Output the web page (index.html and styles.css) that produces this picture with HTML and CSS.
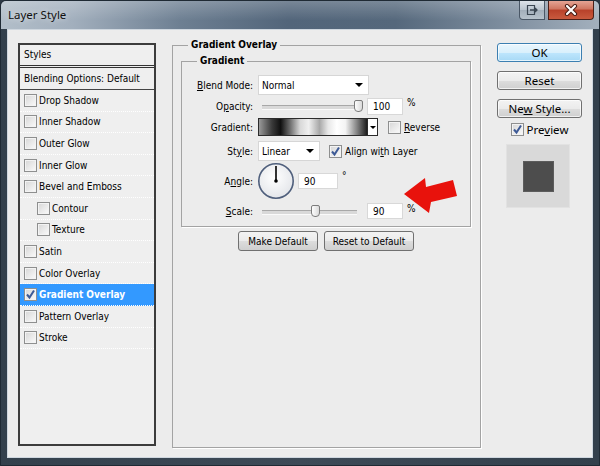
FILE: index.html
```html
<!DOCTYPE html>
<html lang="en">
<head>
    <meta charset="UTF-8">
    <meta name="viewport" content="width=device-width, initial-scale=1.0">
    <link rel="stylesheet" href="styles.css">
    <title>Layer Style</title>
</head>
<body>

<div class="window">
    <div class="titlebar">
        <span class="title">Layer Style</span>
        <div class="caption">
            <span class="cap-btn cap-other">
                <svg width="12" height="12" viewBox="0 0 12 12">
                    <path d="M1.5 1.5h7v9h-7z" fill="none" stroke="#3b4652" stroke-width="1.2"/>
                    <path d="M4 6h7M9 4l2 2-2 2" fill="none" stroke="#3b4652" stroke-width="1.3"/>
                </svg>
            </span>
            <span class="cap-btn cap-close">
                <svg width="14" height="12" viewBox="0 0 14 12">
                    <path d="M3 2l8 8M11 2l-8 8" stroke="#4a1d14" stroke-width="4.2" stroke-linecap="round"/>
                    <path d="M3 2l8 8M11 2l-8 8" stroke="#fff" stroke-width="2.2" stroke-linecap="round"/>
                </svg>
            </span>
        </div>
    </div>

    <div class="frame">
        <div class="client">

            <div class="styles-panel">
                <div class="panel-head">Styles</div>
                <div class="panel-blend">Blending Options: Default</div>
                <div class="fx"><span class="cb"></span>Drop Shadow</div>
                <div class="fx"><span class="cb"></span>Inner Shadow</div>
                <div class="fx"><span class="cb"></span>Outer Glow</div>
                <div class="fx"><span class="cb"></span>Inner Glow</div>
                <div class="fx"><span class="cb"></span>Bevel and Emboss</div>
                <div class="fx sub"><span class="cb"></span>Contour</div>
                <div class="fx sub"><span class="cb"></span>Texture</div>
                <div class="fx"><span class="cb"></span>Satin</div>
                <div class="fx"><span class="cb"></span>Color Overlay</div>
                <div class="fx on"><span class="cb"><svg width="11" height="11" viewBox="0 0 11 11"><path d="M2 5.5l2.5 3L9 1.5" fill="none" stroke="#3d5a96" stroke-width="2"/></svg></span>Gradient Overlay</div>
                <div class="fx"><span class="cb"></span>Pattern Overlay</div>
                <div class="fx"><span class="cb"></span>Stroke</div>
            </div>

            <fieldset class="group main">
                <legend>Gradient Overlay</legend>

                <fieldset class="group inner">
                    <legend>Gradient</legend>

                    <div class="row r-blend">
                        <span class="lbl"><u>B</u>lend Mode:</span>
                        <span class="select sel-blend">Normal<span class="caret"></span></span>
                    </div>

                    <div class="row r-opacity">
                        <span class="lbl">O<u>p</u>acity:</span>
                        <span class="slider sl-opacity"><span class="thumb" style="left: 92px"></span></span>
                        <span class="num num-opacity">100</span>
                        <span class="unit">%</span>
                    </div>

                    <div class="row r-gradient">
                        <span class="lbl">Gradient:</span>
                        <span class="grad-pick"><span class="grad"></span><span class="grad-drop"><span class="caret small"></span></span></span>
                        <span class="cb cb-reverse"></span>
                        <span class="cb-text"><u>R</u>everse</span>
                    </div>

                    <div class="row r-style">
                        <span class="lbl">St<u>y</u>le:</span>
                        <span class="select sel-style">Linear<span class="caret"></span></span>
                        <span class="cb cb-align"><svg width="11" height="11" viewBox="0 0 11 11"><path d="M2 5.5l2.5 3L9 1.5" fill="none" stroke="#3d5a96" stroke-width="2"/></svg></span>
                        <span class="cb-text">Align wi<u>t</u>h Layer</span>
                    </div>

                    <div class="row r-angle">
                        <span class="lbl">A<u>n</u>gle:</span>
                        <svg class="dial" width="38" height="38" viewBox="0 0 38 38">
                            <defs>
                                <radialGradient id="dialfill" cx="0.45" cy="0.4" r="0.6">
                                    <stop offset="0" stop-color="#ffffff"/>
                                    <stop offset="1" stop-color="#e4e6ea"/>
                                </radialGradient>
                            </defs>
                            <circle cx="19" cy="19" r="17.2" fill="url(#dialfill)" stroke="#4f5f7c" stroke-width="1.6"/>
                            <line x1="19" y1="19" x2="19" y2="4" stroke="#000" stroke-width="1.6"/>
                            <circle cx="19" cy="19" r="1.8" fill="#000"/>
                        </svg>
                        <span class="num num-angle">90</span>
                        <span class="unit unit-deg">°</span>
                    </div>

                    <div class="row r-scale">
                        <span class="lbl"><u>S</u>cale:</span>
                        <span class="slider sl-scale"><span class="thumb" style="left: 49px"></span></span>
                        <span class="num num-scale">90</span>
                        <span class="unit">%</span>
                    </div>
                </fieldset>

                <div class="defaults">
                    <span class="btn btn-make">Make Default</span>
                    <span class="btn btn-reset">Reset to Default</span>
                </div>
            </fieldset>

            <div class="side">
                <span class="sbtn ok">OK</span>
                <span class="sbtn">Reset</span>
                <span class="sbtn"><span>Ne<u>w</u> Style...</span></span>
                <div class="preview-row">
                    <span class="cb"><svg width="11" height="11" viewBox="0 0 11 11"><path d="M2 5.5l2.5 3L9 1.5" fill="none" stroke="#3d5a96" stroke-width="2"/></svg></span>
                    <span>Pre<u>v</u>iew</span>
                </div>
                <div class="thumbnail"><span class="thumb-square"></span></div>
            </div>

        </div>
    </div>
</div>

<svg class="arrow" width="600" height="466" viewBox="0 0 600 466">
    <polygon points="404,194 425,178 426,187 453,180 457,196 431,202 429,213" fill="#e8120c"/>
</svg>

</body>
</html>
```

FILE: styles.css
```css
* {
    box-sizing: border-box;
}

body {
    margin: 0;
    width: 600px;
    height: 466px;
    overflow: hidden;
    position: relative;
    background: #2d3945;
    font-family: "DejaVu Sans Condensed", "DejaVu Sans", sans-serif;
    font-stretch: condensed;
    font-size: 10px;
    color: #000;
}

.window {
    width: 600px;
    height: 466px;
    display: flex;
    flex-direction: column;
    border: 1px solid #1f2a34;
    border-radius: 6px 6px 0 0;
    overflow: hidden;
    background: #3a4754;
}

/* title bar */
.titlebar {
    height: 28px;
    flex: none;
    display: flex;
    justify-content: space-between;
    align-items: flex-start;
    padding-left: 7px;
    background:
        linear-gradient(to bottom, rgba(255, 255, 255, 0.22), rgba(255, 255, 255, 0) 70%),
        linear-gradient(to right, #b2bec9 0%, #a2afbd 12%, #6d7f92 30%, #52657a 48%, #55687c 66%, #7d8d9e 84%, #a3b0bd 100%);
}

.title {
    margin-top: 6px;
    font-family: "Noto Sans", sans-serif;
    font-stretch: normal;
    font-size: 11.5px;
    color: #111;
    text-shadow: 0 0 6px rgba(255, 255, 255, 0.8);
}

.caption {
    display: flex;
    gap: 3px;
    margin-right: 5px;
}

.cap-btn {
    height: 19px;
    display: flex;
    align-items: center;
    justify-content: center;
    border: 1px solid #4a5766;
    border-top: none;
}

.cap-other {
    width: 26px;
    border-radius: 0 0 0 4px;
    background: linear-gradient(to bottom, #dde3e9, #b9c3cd 50%, #a3afbb 51%, #b7c2cc);
}

.cap-close {
    width: 46px;
    border-color: #4b2019;
    border-radius: 0 0 4px 0;
    background: linear-gradient(to bottom, #e5a494, #cf7560 45%, #b8412a 50%, #c95a3e 100%);
}

/* frame + client */
.frame {
    flex: 1;
    display: flex;
    padding: 0 6px 7px;
    background: linear-gradient(to right, #33404c, #3d4a57 50%, #33404c);
}

.client {
    flex: 1;
    display: flex;
    align-items: flex-start;
    padding: 9px 0 0 10px;
    background: #ececec;
    border: 1px solid #cfd7df;
}

/* styles list */
.styles-panel {
    width: 138px;
    height: 403px;
    margin-top: 4px;
    border: 2px solid #3c3c3c;
    background: #efefef;
}

.panel-head {
    height: 23px;
    padding-left: 4px;
    line-height: 20px;
    border-bottom: 3px double #333;
}

.panel-blend {
    height: 22px;
    padding-left: 4px;
    line-height: 21px;
    border-bottom: 1px solid #444;
}

.fx {
    height: 21.6px;
    display: flex;
    align-items: center;
    gap: 2px;
    padding-left: 4px;
    border-bottom: 1px dotted #fff;
}

.fx.sub {
    padding-left: 17px;
}

.fx.on {
    background: #3399ff;
    color: #fff;
    font-weight: bold;
}

.cb {
    width: 13px;
    height: 13px;
    flex: none;
    display: flex;
    align-items: center;
    justify-content: center;
    border: 1px solid #8e8f8f;
    background: linear-gradient(135deg, #d6d6d6, #fbfbfb);
    box-shadow: inset 0 0 0 1px #f3f3f3;
}

/* group boxes */
.group {
    margin: 0;
    min-width: 0;
    border: 1px solid #a3a3a3;
    box-shadow: 1px 1px 0 #fff;
}

.group legend {
    padding: 0 3px;
    font-weight: bold;
    line-height: 12px;
}

.main {
    width: 309px;
    height: 409px;
    margin-left: 16px;
    padding: 4px 9px 0 8px;
}

.main > legend {
    margin-left: 7px;
}

.inner {
    padding: 8px 0 7px;
}

.inner > legend {
    margin-left: 15px;
}

.row {
    display: flex;
    align-items: center;
}

.lbl {
    width: 71px;
    margin-right: 5px;
    text-align: right;
}

.r-blend { height: 20px; }
.r-opacity { height: 18px; margin-top: 2px; }
.r-gradient { height: 18px; margin-top: 3px; }
.r-style { height: 20px; margin-top: 5px; }
.r-angle { height: 36px; margin-top: 2px; }
.r-scale { height: 16px; margin-top: 4px; }

.select {
    height: 20px;
    display: flex;
    align-items: center;
    justify-content: space-between;
    padding: 0 5px 0 3px;
    background: #fff;
    border: 1px solid #d6d6d6;
}

.sel-blend { width: 111px; }
.sel-style { width: 62px; }

.caret {
    width: 0;
    height: 0;
    border-left: 4px solid transparent;
    border-right: 4px solid transparent;
    border-top: 4px solid #000;
}

.caret.small {
    border-left-width: 3px;
    border-right-width: 3px;
    border-top-width: 3px;
}

.slider {
    position: relative;
    height: 14px;
    margin-left: 4px;
}

.slider::before {
    content: "";
    position: absolute;
    left: 0;
    right: 0;
    top: 6px;
    height: 3px;
    border-top: 1px solid #a8a8a8;
    border-bottom: 1px solid #fafafa;
    background: #d9d9d9;
}

.sl-opacity { width: 100px; }
.sl-scale { width: 95px; }

.thumb {
    position: absolute;
    top: 1px;
    width: 9px;
    height: 12px;
    border: 1px solid #7c7c7c;
    border-radius: 2px 2px 4px 4px;
    background: linear-gradient(to right, #fdfdfd, #dadada);
}

.num {
    height: 17px;
    padding-left: 5px;
    line-height: 15px;
    background: #fff;
    border: 1px solid #d8d8d8;
}

.num-opacity { width: 36px; margin-left: 5px; }
.num-angle { width: 40px; height: 16px; margin-left: 3px; }
.num-scale { width: 36px; height: 16px; margin-left: 10px; }

.unit {
    align-self: flex-start;
    margin-left: 4px;
}

.unit-deg {
    margin-top: 7px;
}

.grad-pick {
    width: 120px;
    height: 18px;
    display: flex;
    border: 1px solid #2b2b2b;
}

.grad {
    flex: 1;
    background: linear-gradient(to right, #9a9a9a 0%, #3a3a3a 12%, #101010 20%, #707070 29%, #d8d8d8 38%, #f0f0f0 46%, #a8a8a8 56%, #e8e8e8 64%, #ffffff 72%, #f4f4f4 80%, #8a8a8a 90%, #1c1c1c 100%);
}

.grad-drop {
    width: 10px;
    display: flex;
    align-items: center;
    justify-content: center;
    border-left: 1px solid #2b2b2b;
    background: #fff;
}

.cb-reverse { margin-left: 10px; }
.cb-align { margin-left: 9px; }

.cb-text {
    margin-left: 3px;
}

.dial {
    margin-left: -1px;
    flex: none;
}

.defaults {
    display: flex;
    justify-content: center;
    gap: 6px;
    margin-top: 4px;
}

.btn {
    height: 20px;
    display: flex;
    align-items: center;
    justify-content: center;
    border: 1px solid #707070;
    border-radius: 3px;
    background: linear-gradient(to bottom, #f3f3f3, #ebebeb 50%, #dddddd 51%, #cfcfcf);
}

.btn-make { width: 80px; }
.btn-reset { width: 90px; }

/* right column */
.side {
    width: 85px;
    margin: 4px 0 0 16px;
    display: flex;
    flex-direction: column;
    font-family: "Noto Sans", sans-serif;
    font-stretch: normal;
    font-size: 11.5px;
}

.sbtn {
    height: 19px;
    margin-bottom: 9px;
    display: flex;
    align-items: center;
    justify-content: center;
    border: 1px solid #707070;
    border-radius: 3px;
    background: linear-gradient(to bottom, #f3f3f3, #ebebeb 50%, #dddddd 51%, #cfcfcf);
    box-shadow: inset 0 0 0 1px rgba(255, 255, 255, 0.7);
}

.sbtn.ok {
    border-color: #3c7fb1;
    background: linear-gradient(to bottom, #eaf6fd, #d9f0fc 50%, #bee6fd 51%, #a7d9f5);
}

.preview-row {
    height: 16px;
    margin-top: -6px;
    display: flex;
    align-items: center;
    justify-content: center;
    gap: 3px;
}

.thumbnail {
    width: 64px;
    height: 64px;
    margin: 7px 0 0 9px;
    display: flex;
    align-items: center;
    justify-content: center;
    border: 1px solid #e2e2e2;
    background: #d9d9d9;
}

.thumb-square {
    width: 31px;
    height: 31px;
    background: #4d4d4d;
    border: 1px solid #5c5c5c;
}

.arrow {
    position: absolute;
    left: 0;
    top: 0;
    pointer-events: none;
}
```
